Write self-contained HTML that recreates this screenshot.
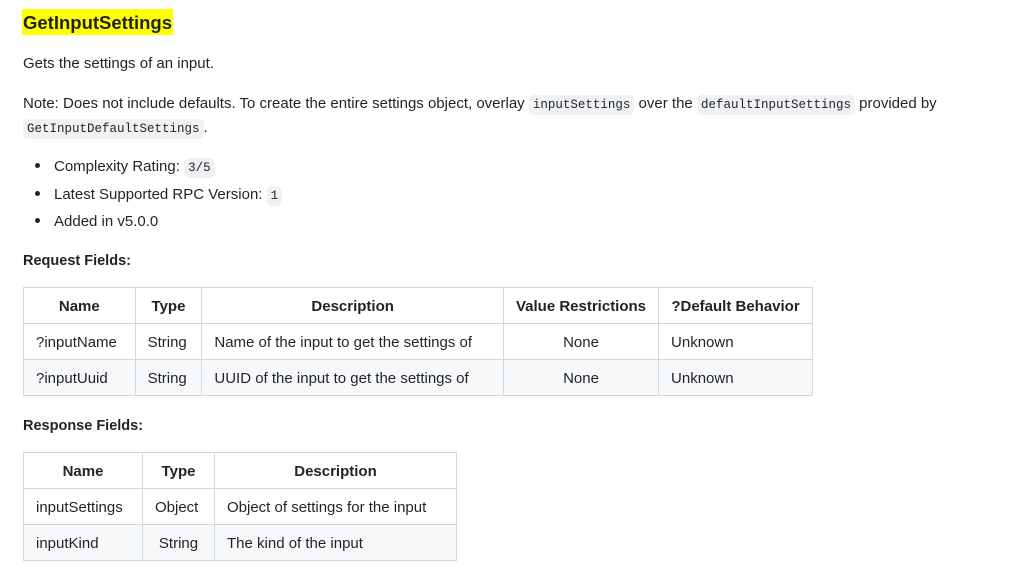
<!DOCTYPE html>
<html><head><meta charset="utf-8"><style>
body{margin:0;width:1024px;height:571px;background:#fff;font-family:"Liberation Sans",sans-serif;color:#1f2328;font-size:15px;position:relative;overflow:hidden}
.a{position:absolute;white-space:nowrap}
code{font-family:"Liberation Mono",monospace;font-size:12.5px;background:#eff1f3;border-radius:5px;padding:3px 4px}
table{position:absolute;border-collapse:collapse;font-size:15px}
td,th{border:1px solid #d1d9e0;padding:2px 12px 0;height:33px;white-space:nowrap}
th{font-weight:bold;text-align:center}
tr:nth-child(3) td{background:#f6f8fa}
.b{font-weight:bold}
.dot{position:absolute;left:35px;width:5px;height:5px;border-radius:50%;background:#1f2328}
</style></head><body>
<div class="a b" style="left:22px;top:9px;height:26px;line-height:28px;font-size:18.5px;background:#ffff00;padding:0 1px">GetInputSettings</div>
<div class="a" style="left:23px;top:55px">Gets the settings of an input.</div>
<div class="a" style="left:23px;top:95px">Note: Does not include defaults. To create the entire settings object, overlay <code>inputSettings</code> over the <code>defaultInputSettings</code> provided by</div>
<div class="a" style="left:23px;top:119px"><code>GetInputDefaultSettings</code>.</div>
<div class="dot" style="top:163px"></div><div class="a" style="left:54px;top:158px">Complexity Rating: <code>3/5</code></div>
<div class="dot" style="top:191px"></div><div class="a" style="left:54px;top:186px">Latest Supported RPC Version: <code>1</code></div>
<div class="dot" style="top:218px"></div><div class="a" style="left:54px;top:213px">Added in v5.0.0</div>
<div class="a b" style="left:23px;top:253px;font-size:14.5px">Request Fields:</div>
<table style="left:23px;top:287px;width:790px">
<tr><th style="width:87px">Name</th><th style="width:42px">Type</th><th style="width:278px">Description</th><th style="width:128px">Value Restrictions</th><th style="width:129px">?Default Behavior</th></tr>
<tr><td>?inputName</td><td>String</td><td>Name of the input to get the settings of</td><td style="text-align:center">None</td><td>Unknown</td></tr>
<tr><td>?inputUuid</td><td>String</td><td>UUID of the input to get the settings of</td><td style="text-align:center">None</td><td>Unknown</td></tr>
</table>
<div class="a b" style="left:23px;top:418px;font-size:14.5px">Response Fields:</div>
<table style="left:23px;top:452px;width:434px">
<tr><th style="width:94px">Name</th><th style="width:47px">Type</th><th style="width:217px">Description</th></tr>
<tr><td>inputSettings</td><td>Object</td><td>Object of settings for the input</td></tr>
<tr><td>inputKind</td><td style="text-align:center">String</td><td>The kind of the input</td></tr>
</table>
</body></html>
